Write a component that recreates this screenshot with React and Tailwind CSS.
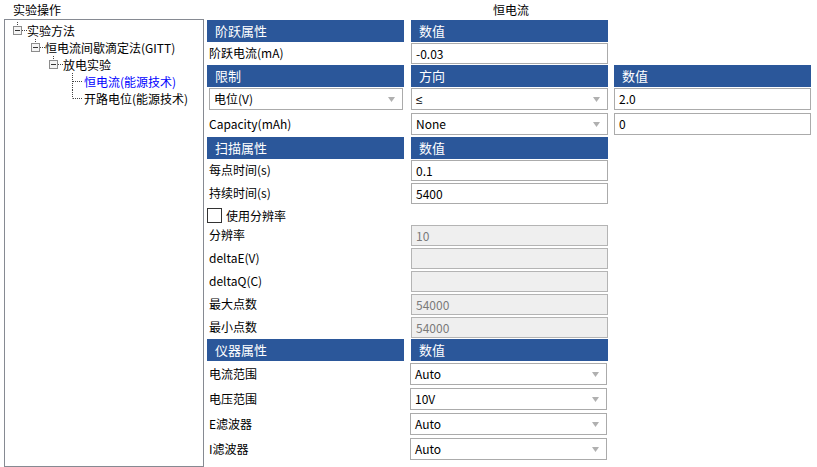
import React from 'react'

const HEAD = 'bg-[#2b579a] text-white text-[13px] h-full pl-[8px] flex items-center w-[197px]'
const INPUT = 'h-[21px] w-[197px] border border-[#ababab] bg-white px-[4px] flex items-center text-[12px] text-black'
const DISABLED = 'h-[21px] w-[197px] border border-[#b4b4b4] bg-[#efefef] px-[4px] flex items-center text-[12px] text-[#7a7a7a]'

function Arrow() {
  return (
    <svg width="7" height="5" viewBox="0 0 7 5" className="shrink-0 ml-auto mr-[3px]">
      <polygon points="0,0 7,0 3.5,5" fill="#b0b0b0" />
    </svg>
  )
}

function Combo({ value, className = 'w-[197px]' }) {
  return (
    <div className={`h-[22px] ${className} border border-[#ababab] bg-white pl-[4px] pr-[4px] flex items-center text-[12px] text-black`}>
      <span>{value}</span>
      <Arrow />
    </div>
  )
}

// tree connector with collapse box
function Expander() {
  return (
    <svg width="18" height="17" className="shrink-0">
      <line x1="8.5" y1="0" x2="8.5" y2="4" stroke="#444" strokeDasharray="1 1" />
      <rect x="4.5" y="4.5" width="8" height="8" fill="#f4f4f4" stroke="#8c8c8c" />
      <line x1="6" y1="8.5" x2="11" y2="8.5" stroke="#333" />
      <line x1="13" y1="8.5" x2="18" y2="8.5" stroke="#444" strokeDasharray="1 1" />
    </svg>
  )
}

function Leaf({ last }) {
  return (
    <svg width="20" height="17" className="shrink-0">
      <line x1="9.5" y1="0" x2="9.5" y2={last ? 8.5 : 17} stroke="#444" strokeDasharray="1 1" />
      <line x1="10" y1="8.5" x2="20" y2="8.5" stroke="#444" strokeDasharray="1 1" />
    </svg>
  )
}

function TreeRow({ indent, children, leaf, last, blue }) {
  return (
    <div className="h-[17px] flex items-center whitespace-nowrap" style={{ paddingLeft: indent }}>
      {leaf ? <Leaf last={last} /> : <Expander />}
      <span className={`text-[12px] leading-[17px] ${leaf ? 'ml-[1px]' : ''} ${blue ? 'text-[#0000ff]' : 'text-black'}`}>{children}</span>
    </div>
  )
}

function Label({ children }) {
  return <div className="w-[197px] pl-[2px] text-[12px] text-black leading-[21px]">{children}</div>
}

function FieldRow({ label, value, disabled }) {
  return (
    <div className="h-[23px] flex items-start">
      <Label>{label}</Label>
      <div className={`ml-[7px] mt-[1px] ${disabled ? DISABLED : INPUT}`}>{value}</div>
    </div>
  )
}

function ComboRow({ label, value }) {
  return (
    <div className="h-[25px] flex items-start pt-[1px]">
      <div className="w-[197px] pl-[2px] text-[12px] text-black leading-[22px]">{label}</div>
      <div className="ml-[6px]">
        <Combo value={value} />
      </div>
    </div>
  )
}

function Header({ a, b, c }) {
  return (
    <div className="h-[22px] flex">
      <div className={HEAD}>{a}</div>
      <div className={`${HEAD} ml-[7px]`}>{b}</div>
      {c && <div className={`${HEAD} ml-[6px]`}>{c}</div>}
    </div>
  )
}

export default function App() {
  return (
    <div className="w-[817px] h-[467px] bg-white flex overflow-hidden font-['Noto_Sans_CJK_SC',sans-serif] text-black">
      {/* left: tree */}
      <div className="w-[206px] shrink-0 flex flex-col">
        <div className="h-[20px] pl-[13px] flex items-center text-[12px]">实验操作</div>
        <div className="ml-[4px] w-[200px] h-[460px] border border-[#868a92] pt-[2px] pl-[4px]">
          <TreeRow indent={0}>实验方法</TreeRow>
          <TreeRow indent={18}>恒电流间歇滴定法(GITT)</TreeRow>
          <TreeRow indent={36}>放电实验</TreeRow>
          <TreeRow indent={54} leaf blue>恒电流(能源技术)</TreeRow>
          <TreeRow indent={54} leaf last>开路电位(能源技术)</TreeRow>
        </div>
      </div>

      {/* right: properties */}
      <div className="flex-1 flex flex-col pl-[1px]">
        <div className="h-[20px] flex items-center justify-center text-[12px] pr-[2px]">恒电流</div>

        <Header a="阶跃属性" b="数值" />
        <FieldRow label="阶跃电流(mA)" value="-0.03" />

        <Header a="限制" b="方向" c="数值" />
        <div className="h-[25px] flex items-start pt-[1px]">
          <div className="ml-[2px]">
            <Combo value="电位(V)" className="w-[194px]" />
          </div>
          <div className="ml-[8px]">
            <Combo value={<span className="font-['Liberation_Sans',sans-serif]">≤</span>} />
          </div>
          <div className={`ml-[6px] ${INPUT} h-[22px]`}>2.0</div>
        </div>
        <div className="h-[25px] flex items-start pt-[1px]">
          <div className="w-[197px] pl-[2px] text-[12px] leading-[22px]">Capacity(mAh)</div>
          <div className="ml-[7px]">
            <Combo value="None" />
          </div>
          <div className={`ml-[6px] ${INPUT} h-[22px]`}>0</div>
        </div>

        <Header a="扫描属性" b="数值" />
        <FieldRow label="每点时间(s)" value="0.1" />
        <FieldRow label="持续时间(s)" value="5400" />
        <div className="h-[19px] flex items-center pt-[1px]">
          <div className="w-[15px] h-[15px] border border-[#333] bg-white" />
          <span className="ml-[4px] text-[12px] leading-[15px]">使用分辨率</span>
        </div>
        <FieldRow label="分辨率" value="10" disabled />
        <FieldRow label="deltaE(V)" value="" disabled />
        <FieldRow label="deltaQ(C)" value="" disabled />
        <FieldRow label="最大点数" value="54000" disabled />
        <FieldRow label="最小点数" value="54000" disabled />

        <Header a="仪器属性" b="数值" />
        <div className="h-[1px]" />
        <ComboRow label="电流范围" value="Auto" />
        <ComboRow label="电压范围" value="10V" />
        <ComboRow label="E滤波器" value="Auto" />
        <ComboRow label="I滤波器" value="Auto" />
      </div>
    </div>
  )
}
